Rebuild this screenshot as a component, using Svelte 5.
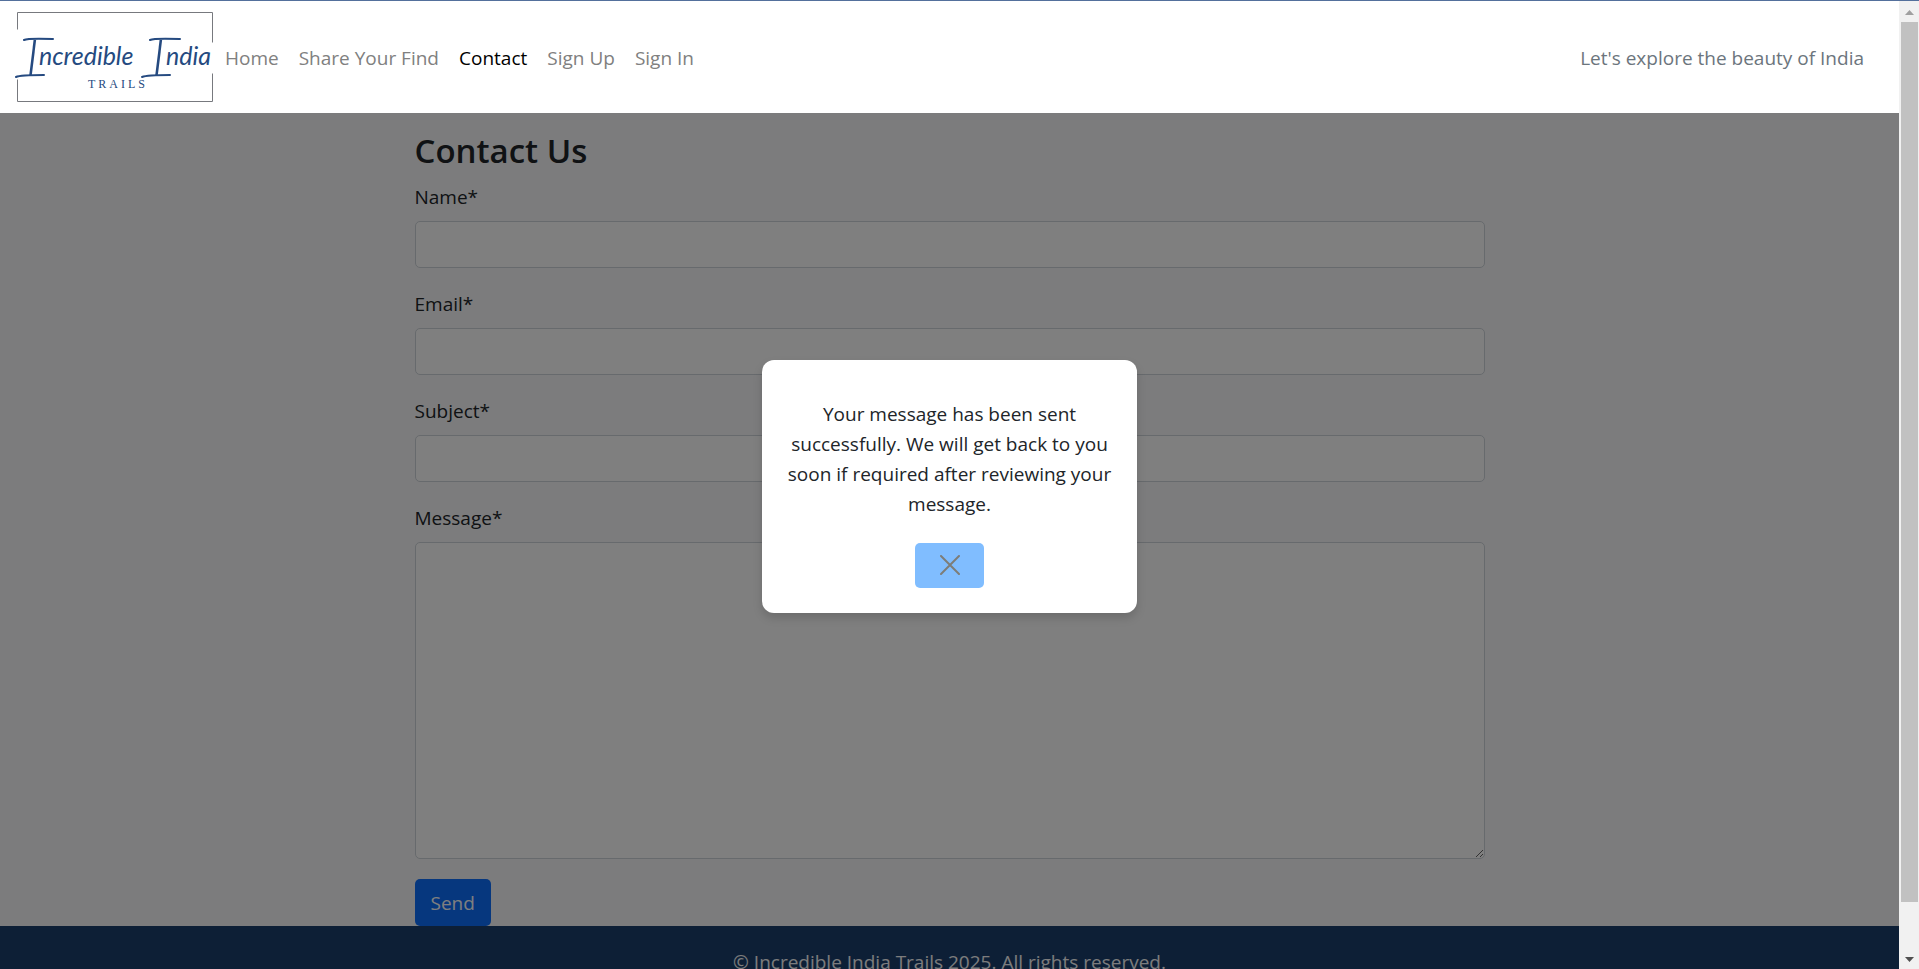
<script>
  let open = $state(true);
  const links = [
    { label: 'Home' },
    { label: 'Share Your Find' },
    { label: 'Contact', active: true },
    { label: 'Sign Up' },
    { label: 'Sign In' }
  ];
  const fields = [
    { id: 'name', label: 'Name*', type: 'text' },
    { id: 'email', label: 'Email*', type: 'email' },
    { id: 'subject', label: 'Subject*', type: 'text' }
  ];
</script>

<div class="window">
  <div class="page">
    <header class="navbar">
      <a class="brand" href="#home" aria-label="Incredible India Trails">
        <svg width="200" height="92" viewBox="0 0 200 92" aria-hidden="true">
          <g fill="none" stroke="#77797e" stroke-width="1">
            <path d="M1.500 18.500V1.500H196.500V31.500M1.500 68.500V90.500H196.500V62.500" />
          </g>
          <g fill="#254a80">
            <text class="initial" x="10" y="65">I</text>
            <text class="script" x="23" y="54">ncredible</text>
            <text class="initial" x="136" y="65">I</text>
            <text class="script" x="150" y="54">ndia</text>
            <text class="small" x="72" y="77">TRAILS</text>
          </g>
          <g fill="none" stroke="#254a80" stroke-width="2" stroke-linecap="round">
            <path d="M8 29Q12 27 37 28M0 66Q4 64 28 64M134 29Q138 27 164 28M126 66Q131 64 154 64" />
          </g>
        </svg>
      </a>
      <nav>
        {#each links as link}
          <a href="#{link.label}" class:active={link.active}>{link.label}</a>
        {/each}
      </nav>
      <span class="tagline">Let's explore the beauty of India</span>
    </header>

    <main>
      <form onsubmit={(e) => e.preventDefault()}>
        <h2>Contact Us</h2>
        {#each fields as field}
          <div class="field">
            <label for={field.id}>{field.label}</label>
            <input id={field.id} type={field.type} />
          </div>
        {/each}
        <div class="field">
          <label for="message">Message*</label>
          <textarea id="message"></textarea>
        </div>
        <button class="send" type="submit">Send</button>
      </form>
    </main>

    <footer>© Incredible India Trails 2025. All rights reserved.</footer>

    {#if open}
      <div class="overlay">
        <div class="modal" role="dialog" aria-modal="true" aria-describedby="sent">
          <p id="sent">
            Your message has been sent successfully. We will get back to you soon if required after
            reviewing your message.
          </p>
          <button class="close" type="button" aria-label="Close" onclick={() => (open = false)}>
            <svg width="20" height="20" viewBox="0 0 20 20" aria-hidden="true">
              <path d="M1 1L19 19M19 1L1 19" stroke="#7d7d78" stroke-width="2" stroke-linecap="round" />
            </svg>
          </button>
        </div>
      </div>
    {/if}
  </div>

  <div class="scrollbar" aria-hidden="true">
    <svg width="20" height="21" viewBox="0 0 20 21"><path d="M6 14L10.500 9L15 14Z" fill="#a0a0a0" /></svg>
    <div class="track"><div class="thumb"></div></div>
    <svg width="20" height="21" viewBox="0 0 20 21"><path d="M6 9L10.500 14L15 9Z" fill="#505050" /></svg>
  </div>
</div>

<style>
  :global(body) {
    margin: 0;
    font: 19px/30px "Open Sans", "Noto Sans", sans-serif;
    color: #212529;
  }
  * {
    box-sizing: border-box;
  }
  .window {
    display: flex;
    height: 100vh;
    overflow: hidden;
    border-top: 1px solid #54709c;
  }
  .page {
    position: relative;
    flex: 1;
    min-width: 0;
    overflow: hidden;
    background: #f8f9fa;
  }
  .navbar {
    position: relative;
    z-index: 2;
    display: flex;
    align-items: center;
    padding: 10px 35px 10px 16px;
    background: #fff;
  }
  .brand {
    display: flex;
  }
  .brand svg {
    overflow: visible;
  }
  .initial {
    font: italic 300 51px Lato, sans-serif;
  }
  .script {
    font: italic 400 25px Lato, sans-serif;
  }
  .small {
    font: 12px "Liberation Serif", serif;
    letter-spacing: 3px;
  }
  nav {
    display: flex;
    gap: 20px;
    padding: 2px 0 0 9px;
  }
  nav a {
    color: #808080;
    text-decoration: none;
  }
  nav a.active {
    color: #000;
  }
  .tagline {
    margin-left: auto;
    padding-top: 2px;
    color: #6c757d;
  }
  form {
    max-width: 1070px;
    margin: 0 auto;
    padding-top: 17px;
  }
  h2 {
    margin: 0 0 10px;
    font-size: 33px;
    line-height: 42px;
    font-weight: 600;
  }
  .field {
    margin-bottom: 21px;
  }
  .field:last-of-type {
    margin-bottom: 20px;
  }
  label {
    display: block;
    margin-bottom: 9px;
  }
  input,
  textarea {
    display: block;
    width: 100%;
    height: 47px;
    padding: 8px 15px;
    border: 1px solid #ced4da;
    border-radius: 5px;
    background: #fff;
    font: inherit;
  }
  textarea {
    height: 317px;
    resize: vertical;
  }
  button {
    border: 0;
    border-radius: 5px;
    font: inherit;
  }
  .send {
    display: block;
    height: 47px;
    padding: 0 16px;
    background: #0d6efd;
    color: #fff;
  }
  footer {
    padding: 21px 20px;
    background: #1a3e6c;
    color: #f8f9fa;
    text-align: center;
  }
  .overlay {
    position: absolute;
    inset: 0;
    z-index: 1;
    display: flex;
    align-items: center;
    justify-content: center;
    padding-top: 2px;
    background: rgba(0, 0, 0, 0.5);
  }
  .modal {
    width: 375px;
    padding: 39px 24px 25px;
    border-radius: 12px;
    background: #fff;
    box-shadow: 0 5px 10px rgba(0, 0, 0, 0.15);
    text-align: center;
  }
  .modal p {
    margin: 0 0 24px;
  }
  .close {
    display: flex;
    align-items: center;
    justify-content: center;
    width: 69px;
    height: 45px;
    margin: 0 auto;
    background: #80bdff;
  }
  .scrollbar {
    display: flex;
    flex-direction: column;
    width: 20px;
    background: #f1f1f1;
  }
  .track {
    flex: 1;
    padding: 0 1px 0 2px;
  }
  .thumb {
    height: 95%;
    background: #c1c1c1;
  }
</style>
